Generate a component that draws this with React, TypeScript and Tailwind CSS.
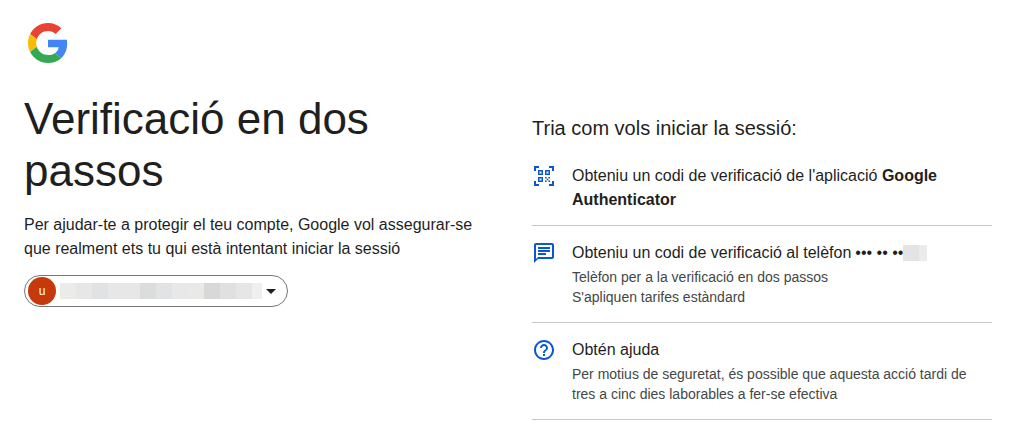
const chipBlocks = [
  "bg-[#ebebea]", "bg-[#e7e7e5]", "bg-[#e0e2e4]", "bg-[#e7e7e7]", "bg-[#e7e7e7]", "bg-[#dbdddb]", "bg-[#e1e3e5]", "bg-[#e8e8e9]",
  "bg-[#e9e9e7]", "bg-[#d8d8d8]", "bg-[#e0e0e0]", "bg-[#e6e6e6]", "bg-[#eeeff0]",
];

function GoogleG() {
  return (
    <svg viewBox="0 0 48 48" className="w-10 h-10 block">
      <path fill="#EA4335" d="M24 9.5c3.54 0 6.71 1.22 9.21 3.6l6.85-6.85C35.9 2.38 30.47 0 24 0 14.62 0 6.51 5.38 2.56 13.22l7.98 6.19C12.43 13.72 17.74 9.5 24 9.5z" />
      <path fill="#4285F4" d="M46.98 24.55c0-1.57-.15-3.09-.38-4.55H24v9.02h12.94c-.58 2.96-2.26 5.48-4.78 7.18l7.73 6c4.51-4.18 7.09-10.36 7.09-17.65z" />
      <path fill="#FBBC05" d="M10.53 28.59c-.48-1.45-.76-2.99-.76-4.59s.27-3.14.76-4.59l-7.98-6.19C.92 16.46 0 20.12 0 24c0 3.88.92 7.54 2.56 10.78l7.97-6.19z" />
      <path fill="#34A853" d="M24 48c6.48 0 11.93-2.13 15.89-5.81l-7.73-6c-2.15 1.45-4.92 2.3-8.16 2.3-6.26 0-11.57-4.22-13.47-9.91l-7.98 6.19C6.51 42.62 14.62 48 24 48z" />
    </svg>
  );
}

function QrIcon() {
  return (
    <svg viewBox="0 0 24 24" className="w-6 h-6 block shrink-0" fill="#0b57d0">
      <path d="M2 2h5v2H4v3H2zM17 2h5v5h-2V4h-3zM2 17h2v3h3v2H2zM20 17h2v5h-5v-2h3z" />
      <path fillRule="evenodd" d="M6 6h5v5H6zm1.5 1.5v2h2v-2zM13 6h5v5h-5zm1.5 1.5v2h2v-2zM6 13h5v5H6zm1.5 1.5v2h2v-2z" />
      <path d="M13 13h1.6v1.6H13zM16.4 13H18v1.6h-1.6zM14.7 14.7h1.6v1.6h-1.6zM13 16.4h1.6V18H13zM16.4 16.4H18V18h-1.6z" />
    </svg>
  );
}

function ChatIcon() {
  return (
    <svg viewBox="0 0 24 24" className="w-6 h-6 block shrink-0" fill="#0b57d0">
      <path d="M20 2H4c-1.1 0-2 .9-2 2v18l4-4h14c1.1 0 2-.9 2-2V4c0-1.1-.9-2-2-2zm0 14H6l-2 2V4h16v12z" />
      <path d="M6 6h12v2H6zM6 9h12v2H6zM6 12h8v2H6z" />
    </svg>
  );
}

function HelpIcon() {
  return (
    <svg viewBox="0 0 24 24" className="w-6 h-6 block shrink-0" fill="#0b57d0">
      <path d="M11 18h2v-2h-2v2zm1-16C6.48 2 2 6.48 2 12s4.48 10 10 10 10-4.48 10-10S17.52 2 12 2zm0 18c-4.41 0-8-3.59-8-8s3.59-8 8-8 8 3.59 8 8-3.59 8-8 8zm0-14c-2.21 0-4 1.79-4 4h2c0-1.1.9-2 2-2s2 .9 2 2c0 2-3 1.75-3 5h2c0-2.25 3-2.5 3-5 0-2.21-1.79-4-4-4z" />
    </svg>
  );
}

export default function App() {
  return (
    <div className="w-[1024px] h-[448px] overflow-hidden bg-white text-[#1f1f1f] font-['Liberation_Sans',Arial,sans-serif] pt-[23px] px-8 pl-6">
      <div className="pl-1">
        <GoogleG />
      </div>
      <div className="flex">
        <div className="w-[508px] shrink-0 pt-[30px]">
          <h1 className="text-[44px] leading-[52px] font-normal">
            Verificació en dos
            <br />
            passos
          </h1>
          <p className="mt-[16px] text-base leading-6">
            Per ajudar-te a protegir el teu compte, Google vol assegurar-se
            <br />
            que realment ets tu qui està intentant iniciar la sessió
          </p>
          <div className="mt-[14px] w-[264px] h-[32px] rounded-full border border-[#747775] flex items-center pl-[3px]">
            <div className="w-7 h-7 rounded-full bg-[#c5390c] text-white text-xs flex items-center justify-center shrink-0">
              u
            </div>
            <div className="flex ml-1">
              {chipBlocks.map((c, i) => (
                <div key={i} className={`w-4 h-4 ${c} last:w-[10px]`} />
              ))}
            </div>
            <div className="ml-[4px] w-0 h-0 border-x-[5px] border-x-transparent border-t-[5px] border-t-[#1f1f1f]" />
          </div>
        </div>
        <div className="w-[460px] pt-[51px]">
          <h2 className="text-[20px] leading-[28px] font-normal">Tria com vols iniciar la sessió:</h2>
          <div className="mt-[22px]">
            <div className="flex gap-4 pb-[13px] border-b border-[#c4c7c5]">
              <QrIcon />
              <div className="text-base leading-6">
                Obteniu un codi de verificació de l'aplicació <b className="font-bold">Google Authenticator</b>
              </div>
            </div>
            <div className="flex gap-4 py-[15px] border-b border-[#c4c7c5]">
              <ChatIcon />
              <div>
                <div className="flex items-center text-base leading-6">
                  Obteniu un codi de verificació al telèfon
                  <span className="ml-1 text-[16px] font-normal">••• •• ••</span>
                  <span className="flex">
                    <span className="w-4 h-4 bg-[#e4e4e4]" />
                    <span className="w-2 h-4 bg-[#ebebeb]" />
                  </span>
                </div>
                <div className="text-sm leading-5 text-[#444746] mt-[2px]">Telèfon per a la verificació en dos passos</div>
                <div className="text-sm leading-5 text-[#444746]">S'apliquen tarifes estàndard</div>
              </div>
            </div>
            <div className="flex gap-4 py-[15px] border-b border-[#c4c7c5]">
              <HelpIcon />
              <div>
                <div className="text-base leading-6">Obtén ajuda</div>
                <div className="text-sm leading-5 text-[#444746] mt-[2px]">
                  Per motius de seguretat, és possible que aquesta acció tardi de tres a cinc dies laborables a fer-se efectiva
                </div>
              </div>
            </div>
          </div>
        </div>
      </div>
    </div>
  );
}
